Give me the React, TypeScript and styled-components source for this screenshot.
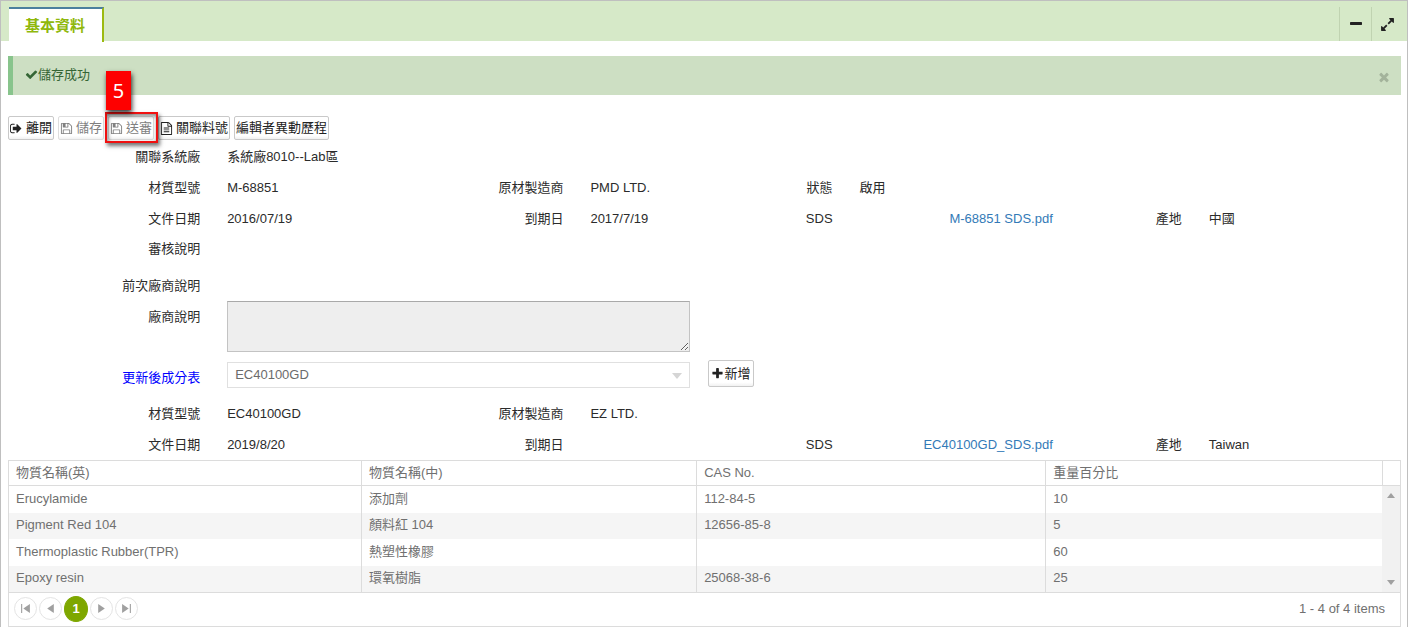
import React from "react";
import styled, { createGlobalStyle, css } from "styled-components";

const GlobalStyle = createGlobalStyle`
  * { box-sizing: border-box; }
  body {
    margin: 0;
    background: #fff;
    color: #2b2b2b;
    font: 13px/18px "Liberation Sans", "Noto Sans CJK TC", sans-serif;
  }
  button, input, select, textarea { font: inherit; color: inherit; margin: 0; }
`;

const icons = {
  signOut:
    "M640 1440q0 4 1 20t.5 26.5-3 23.5-10 19.5-20.5 6.5h-320q-119 0-203.5-84.5t-84.5-203.5v-704q0-119 84.5-203.5t203.5-84.5h320q13 0 22.5 9.5t9.5 22.5q0 4 1 20t.5 26.5-3 23.5-10 19.5-20.5 6.5h-320q-66 0-113 47t-47 113v704q0 66 47 113t113 47h312l11.5 1 11.5 3 8 5.5 7 9 2 13.5zm928-544q0 26-19 45l-544 544q-19 19-45 19t-45-19-19-45v-288h-448q-26 0-45-19t-19-45v-384q0-26 19-45t45-19h448v-288q0-26 19-45t45-19 45 19l544 544q19 19 19 45z",
  save: "M512 1536h768v-384h-768v384zm896 0h128v-896q0-14-10-38.5t-20-34.5l-281-281q-10-10-34-20t-39-10v416q0 40-28 68t-68 28h-576q-40 0-68-28t-28-68v-416h-128v1280h128v-416q0-40 28-68t68-28h832q40 0 68 28t28 68v416zm-384-928v-320q0-13-9.5-22.5t-22.5-9.5h-192q-13 0-22.5 9.5t-9.5 22.5v320q0 13 9.5 22.5t22.5 9.5h192q13 0 22.5-9.5t9.5-22.5zm640 32v928q0 40-28 68t-68 28h-1344q-40 0-68-28t-28-68v-1344q0-40 28-68t68-28h928q40 0 88 20t76 48l280 280q28 28 48 76t20 88z",
  file: "M1596 380q28 28 48 76t20 88v1152q0 40-28 68t-68 28h-1344q-40 0-68-28t-28-68v-1600q0-40 28-68t68-28h896q40 0 88 20t76 48zm-444-244v376h376q-10-29-22-41l-313-313q-12-12-41-22zm384 1528v-1024h-416q-40 0-68-28t-28-68v-416h-768v1536h1280zm-1024-864q0-14 9-23t23-9h704q14 0 23 9t9 23v64q0 14-9 23t-23 9h-704q-14 0-23-9t-9-23v-64zm736 224q14 0 23 9t9 23v64q0 14-9 23t-23 9h-704q-14 0-23-9t-9-23v-64q0-14 9-23t23-9h704zm0 256q14 0 23 9t9 23v64q0 14-9 23t-23 9h-704q-14 0-23-9t-9-23v-64q0-14 9-23t23-9h704z",
  check:
    "M1671 566q0 40-28 68l-724 724-136 136q-28 28-68 28t-68-28l-136-136-362-362q-28-28-28-68t28-68l136-136q28-28 68-28t68 28l294 295 656-657q28-28 68-28t68 28l136 136q28 28 28 68z",
  plus: "M1600 736v192q0 40-28 68t-68 28h-416v416q0 40-28 68t-68 28h-192q-40 0-68-28t-28-68v-416h-416q-40 0-68-28t-28-68v-192q0-40 28-68t68-28h416v-416q0-40 28-68t68-28h192q40 0 68 28t28 68v416h416q40 0 68 28t28 68z",
  minus: "M1664 736v192q0 40-28 68t-68 28h-1344q-40 0-68-28t-28-68v-192q0-40 28-68t68-28h1344q40 0 68 28t28 68z",
  expand:
    "M883 1056q0 13-10 23l-332 332 144 144q19 19 19 45t-19 45-45 19h-448q-26 0-45-19t-19-45v-448q0-26 19-45t45-19 45 19l144 144 332-332q10-10 23-10t23 10l114 114q10 10 10 23zm781-864v448q0 26-19 45t-45 19-45-19l-144-144-332 332q-10 10-23 10t-23-10l-114-114q-10-10-10-23t10-23l332-332-144-144q-19-19-19-45t19-45 45-19h448q26 0 45 19t19 45z",
  close:
    "M1490 1322q0 40-28 68l-136 136q-28 28-68 28t-68-28l-294-294-294 294q-28 28-68 28t-68-28l-136-136q-28-28-28-68t28-68l294-294-294-294q-28-28-28-68t28-68l136-136q28-28 68-28t68 28l294 294 294-294q28-28 68-28t68 28l136 136q28 28 28 68t-28 68l-294 294 294 294q28 28 28 68z",
};

const Svg = styled.svg`
  display: block;
  flex: none;
  fill: currentColor;
`;

function Icon({ name, size = 13 }: { name: keyof typeof icons; size?: number }) {
  return (
    <Svg width={size} height={size} viewBox="0 0 1792 1792" aria-hidden="true">
      <path d={icons[name]} />
    </Svg>
  );
}

const Panel = styled.main`
  border: solid #bfbfbf;
  border-width: 1px 1px 0;
`;

const PanelHeader = styled.header`
  display: flex;
  align-items: flex-end;
  justify-content: space-between;
  height: 40px;
  padding: 0 4px 0 8px;
  background: #d6e9c8;
`;

const Tab = styled.button`
  height: 35px;
  padding: 0 17px 0 16px;
  margin-bottom: -1px;
  border: solid;
  border-width: 2px 2px 0 0;
  border-color: #4c7f9e #9cba12;
  background: #fff;
  color: #8fb80c;
  font-size: 15px;
  font-weight: 700;
`;

const HeaderTools = styled.div`
  display: flex;
`;

const HeaderTool = styled.button`
  display: flex;
  align-items: center;
  justify-content: center;
  width: 32px;
  height: 34px;
  padding: 0;
  border: 0;
  border-left: 1px solid #c0d3b1;
  background: none;
  color: #222;
`;

const PanelBody = styled.div`
  padding: 15px 6px 0 7px;
`;

const Alert = styled.div`
  display: flex;
  align-items: center;
  height: 39px;
  padding: 0 10px 2px 12px;
  border-left: 5px solid #88c48c;
  background: #cddfc3;
  color: #356635;
`;

const AlertClose = styled.button`
  display: flex;
  margin-left: auto;
  padding: 4px 0 0;
  border: 0;
  background: none;
  color: #a3b39b;
`;

const Toolbar = styled.div`
  display: flex;
  gap: 4px;
  margin-top: 21px;
`;

const Button = styled.button`
  display: flex;
  align-items: center;
  gap: 3px;
  height: 24px;
  padding: 0 1px;
  border: 1px solid #c9c9c9;
  border-radius: 2px;
  background: linear-gradient(#fff 85%, #f1f1f1);
  color: #222;
  white-space: nowrap;
  &:disabled { color: #808080; border-color: #dedede; }
`;

const AddButton = styled(Button)`
  gap: 0;
  height: 27px;
  padding: 0 2px;
  margin-left: 4px;
`;

const StepTarget = styled.div`
  position: relative;
`;

const StepFrame = styled.span`
  position: absolute;
  inset: -4px -4px -3px -3px;
  border: 2px solid #f01010;
  box-shadow: 2px 3px 4px rgba(0, 0, 0, 0.55), inset 1px 2px 4px rgba(0, 0, 0, 0.5);
  pointer-events: none;
`;

const StepBadge = styled.span`
  position: absolute;
  left: -2px;
  bottom: 30px;
  width: 25px;
  height: 39px;
  background: #fe0000;
  box-shadow: 1px 3px 5px rgba(0, 0, 0, 0.8);
  color: #fff;
  font: 20px/39px "Noto Sans", sans-serif;
  text-align: center;
`;

const Form = styled.div`
  display: grid;
  grid-template-columns: 205fr 247fr 116fr 127fr 142fr 220fr 129fr 205fr;
  grid-template-rows: 31px 31px 30px 37px 31px 59px 38px 31px 31px;
  margin: 1px 0 0 1px;
`;

const cell = css<{ $row: number; $col: number }>`
  grid-row: ${(p) => p.$row};
  grid-column: ${(p) => p.$col};
  line-height: 31px;
  white-space: nowrap;
`;

const Label = styled.label<{ $row: number; $col: number; $accent?: boolean }>`
  ${cell}
  padding-right: 14px;
  text-align: right;
  ${(p) => p.$accent && css`color: #0000ff; line-height: 36px;`}
`;

const Value = styled.output<{ $row: number; $col: number; $end?: boolean }>`
  ${cell}
  padding: 0 14px 0 13px;
  text-align: ${(p) => (p.$end ? "right" : "left")};
`;

const Wide = styled.div<{ $row: number }>`
  grid-row: ${(p) => p.$row};
  grid-column: 2 / 5;
  padding: 0 14px 0 13px;
`;

const AddCell = styled.div`
  grid-row: 7;
  grid-column: 5;
  display: flex;
  align-items: flex-start;
`;

const Link = styled.a`
  color: #337ab7;
  text-decoration: none;
`;

const Notes = styled.textarea`
  display: block;
  width: 100%;
  height: 51px;
  border: 1px solid #c3c3c3;
  border-top-color: #a9a9a9;
  border-radius: 0;
  background: #eee;
`;

const SelectBox = styled.div`
  position: relative;
  margin-top: 2px;
  &::after {
    content: "";
    position: absolute;
    right: 8px;
    top: 11px;
    border: solid transparent;
    border-width: 6px 5px 0;
    border-top-color: #d5d5d5;
    pointer-events: none;
  }
`;

const Select = styled.select`
  display: block;
  appearance: none;
  width: 100%;
  height: 26px;
  padding: 0 24px 0 7px;
  border: 1px solid #e0e0e0;
  border-radius: 0;
  background: #fff;
  color: #6b6b6b;
`;

const Grid = styled.section`
  border: 1px solid #dcdcdc;
  color: #707070;
`;

const Table = styled.table`
  width: 100%;
  table-layout: fixed;
  border-collapse: separate;
  border-spacing: 0;
  th, td {
    padding: 0 7px;
    font-weight: 400;
    text-align: left;
    border-left: 1px solid #dcdcdc;
  }
  th { height: 25px; border-bottom: 1px solid #dcdcdc; }
  td { padding-bottom: 2px; }
  th:first-child, td:first-child { border-left: 0; }
  tbody tr { height: 27px; }
  tbody tr:nth-child(even) { height: 26px; background: #f5f5f5; }
`;

const ScrollCell = styled.td`
  && { padding: 0; border-left: 0; background: #f1f1f1; }
`;

const ScrollTrack = styled.div`
  display: flex;
  flex-direction: column;
  justify-content: space-between;
  align-items: center;
  height: 106px;
  padding: 7px 0;
`;

const Arrow = styled.i<{ $down?: boolean }>`
  border: solid transparent;
  border-width: ${(p) => (p.$down ? "5px 4px 0" : "0 4px 5px")};
  border-color: ${(p) => (p.$down ? "#a0a0a0 transparent" : "transparent transparent #a0a0a0")};
`;

const GridFooter = styled.footer`
  display: flex;
  align-items: center;
  height: 34px;
  padding: 0 15px 2px 5px;
  border-top: 1px solid #dcdcdc;
`;

const Pager = styled.nav`
  display: flex;
  align-items: center;
  gap: 2px;
  flex: 1;
`;

const PageButton = styled.button<{ $current?: boolean }>`
  display: flex;
  align-items: center;
  justify-content: center;
  width: 23px;
  height: 23px;
  padding: 0;
  border: 1px solid #e4e4e4;
  border-radius: 50%;
  background: #fff;
  color: #a0a0a0;
  ${(p) => p.$current && css`
    width: 24px;
    height: 26px;
    border-color: #7ea700;
    background: #7ea700;
    color: #fff;
    font-weight: 700;
  `}
`;

function PageIcon({ d }: { d: string }) {
  return (
    <Svg width="11" height="11" viewBox="0 0 10 10" aria-hidden="true">
      <path d={d} />
    </Svg>
  );
}

const fields: [number, number, string, string][] = [
  [1, 1, "關聯系統廠", "系統廠8010--Lab區"],
  [2, 1, "材質型號", "M-68851"],
  [2, 3, "原材製造商", "PMD LTD."],
  [2, 5, "狀態", "啟用"],
  [3, 1, "文件日期", "2016/07/19"],
  [3, 3, "到期日", "2017/7/19"],
  [3, 5, "SDS", "M-68851 SDS.pdf"],
  [3, 7, "產地", "中國"],
  [4, 1, "審核說明", ""],
  [5, 1, "前次廠商說明", ""],
  [8, 1, "材質型號", "EC40100GD"],
  [8, 3, "原材製造商", "EZ LTD."],
  [9, 1, "文件日期", "2019/8/20"],
  [9, 3, "到期日", ""],
  [9, 5, "SDS", "EC40100GD_SDS.pdf"],
  [9, 7, "產地", "Taiwan"],
];

const substances = [
  ["Erucylamide", "添加劑", "112-84-5", "10"],
  ["Pigment Red 104", "顏料紅 104", "12656-85-8", "5"],
  ["Thermoplastic Rubber(TPR)", "熱塑性橡膠", "", "60"],
  ["Epoxy resin", "環氧樹脂", "25068-38-6", "25"],
];

const ColName = styled.col`width: 25.3%;`;
const ColLocal = styled.col`width: 24.1%;`;
const ColCas = styled.col`width: 25.1%;`;
const ColScroll = styled.col`width: 18px;`;

export default function App() {
  return (
    <>
      <GlobalStyle />
      <Panel>
        <PanelHeader>
          <Tab type="button">基本資料</Tab>
          <HeaderTools>
            <HeaderTool type="button" aria-label="Minimize"><Icon name="minus" size={14} /></HeaderTool>
            <HeaderTool type="button" aria-label="Expand"><Icon name="expand" size={15} /></HeaderTool>
          </HeaderTools>
        </PanelHeader>
        <PanelBody>
          <Alert role="status">
            <Icon name="check" />
            儲存成功
            <AlertClose type="button" aria-label="Close"><Icon name="close" size={14} /></AlertClose>
          </Alert>
          <Toolbar>
            <Button type="button"><Icon name="signOut" />離開</Button>
            <Button type="button" disabled><Icon name="save" />儲存</Button>
            <StepTarget>
              <Button type="button" disabled><Icon name="save" />送審</Button>
              <StepFrame />
              <StepBadge>5</StepBadge>
            </StepTarget>
            <Button type="button"><Icon name="file" />關聯料號</Button>
            <Button type="button">編輯者異動歷程</Button>
          </Toolbar>
          <Form>
            {fields.map(([row, col, label, value]) => {
              const id = `field-${row}-${col}`;
              const isFile = value.endsWith(".pdf");
              return (
                <React.Fragment key={id}>
                  <Label $row={row} $col={col} htmlFor={id}>{label}</Label>
                  <Value $row={row} $col={col + 1} $end={isFile} id={id}>
                    {isFile ? <Link href="#sds">{value}</Link> : value}
                  </Value>
                </React.Fragment>
              );
            })}
            <Label $row={6} $col={1} htmlFor="notes">廠商說明</Label>
            <Wide $row={6}><Notes id="notes" readOnly /></Wide>
            <Label $row={7} $col={1} $accent htmlFor="composition">更新後成分表</Label>
            <Wide $row={7}>
              <SelectBox>
                <Select id="composition"><option>EC40100GD</option></Select>
              </SelectBox>
            </Wide>
            <AddCell>
              <AddButton type="button"><Icon name="plus" />新增</AddButton>
            </AddCell>
          </Form>
          <Grid>
            <Table>
              <colgroup><ColName /><ColLocal /><ColCas /><col /><ColScroll /></colgroup>
              <thead>
                <tr><th>物質名稱(英)</th><th>物質名稱(中)</th><th>CAS No.</th><th>重量百分比</th><th /></tr>
              </thead>
              <tbody>
                {substances.map((row, i) => (
                  <tr key={row[0]}>
                    {row.map((text, j) => <td key={j}>{text}</td>)}
                    {i === 0 && (
                      <ScrollCell rowSpan={4}>
                        <ScrollTrack><Arrow /><Arrow $down /></ScrollTrack>
                      </ScrollCell>
                    )}
                  </tr>
                ))}
              </tbody>
            </Table>
            <GridFooter>
              <Pager aria-label="Pages">
                <PageButton type="button" aria-label="First page"><PageIcon d="M1 1h1v8H1zM9 1v8L3 5z" /></PageButton>
                <PageButton type="button" aria-label="Previous page"><PageIcon d="M8 1v8L2 5z" /></PageButton>
                <PageButton type="button" $current>1</PageButton>
                <PageButton type="button" aria-label="Next page"><PageIcon d="M2 1v8l6-4z" /></PageButton>
                <PageButton type="button" aria-label="Last page"><PageIcon d="M1 1v8l6-4zM8 1h1v8H8z" /></PageButton>
              </Pager>
              1 - 4 of 4 items
            </GridFooter>
          </Grid>
        </PanelBody>
      </Panel>
    </>
  );
}
